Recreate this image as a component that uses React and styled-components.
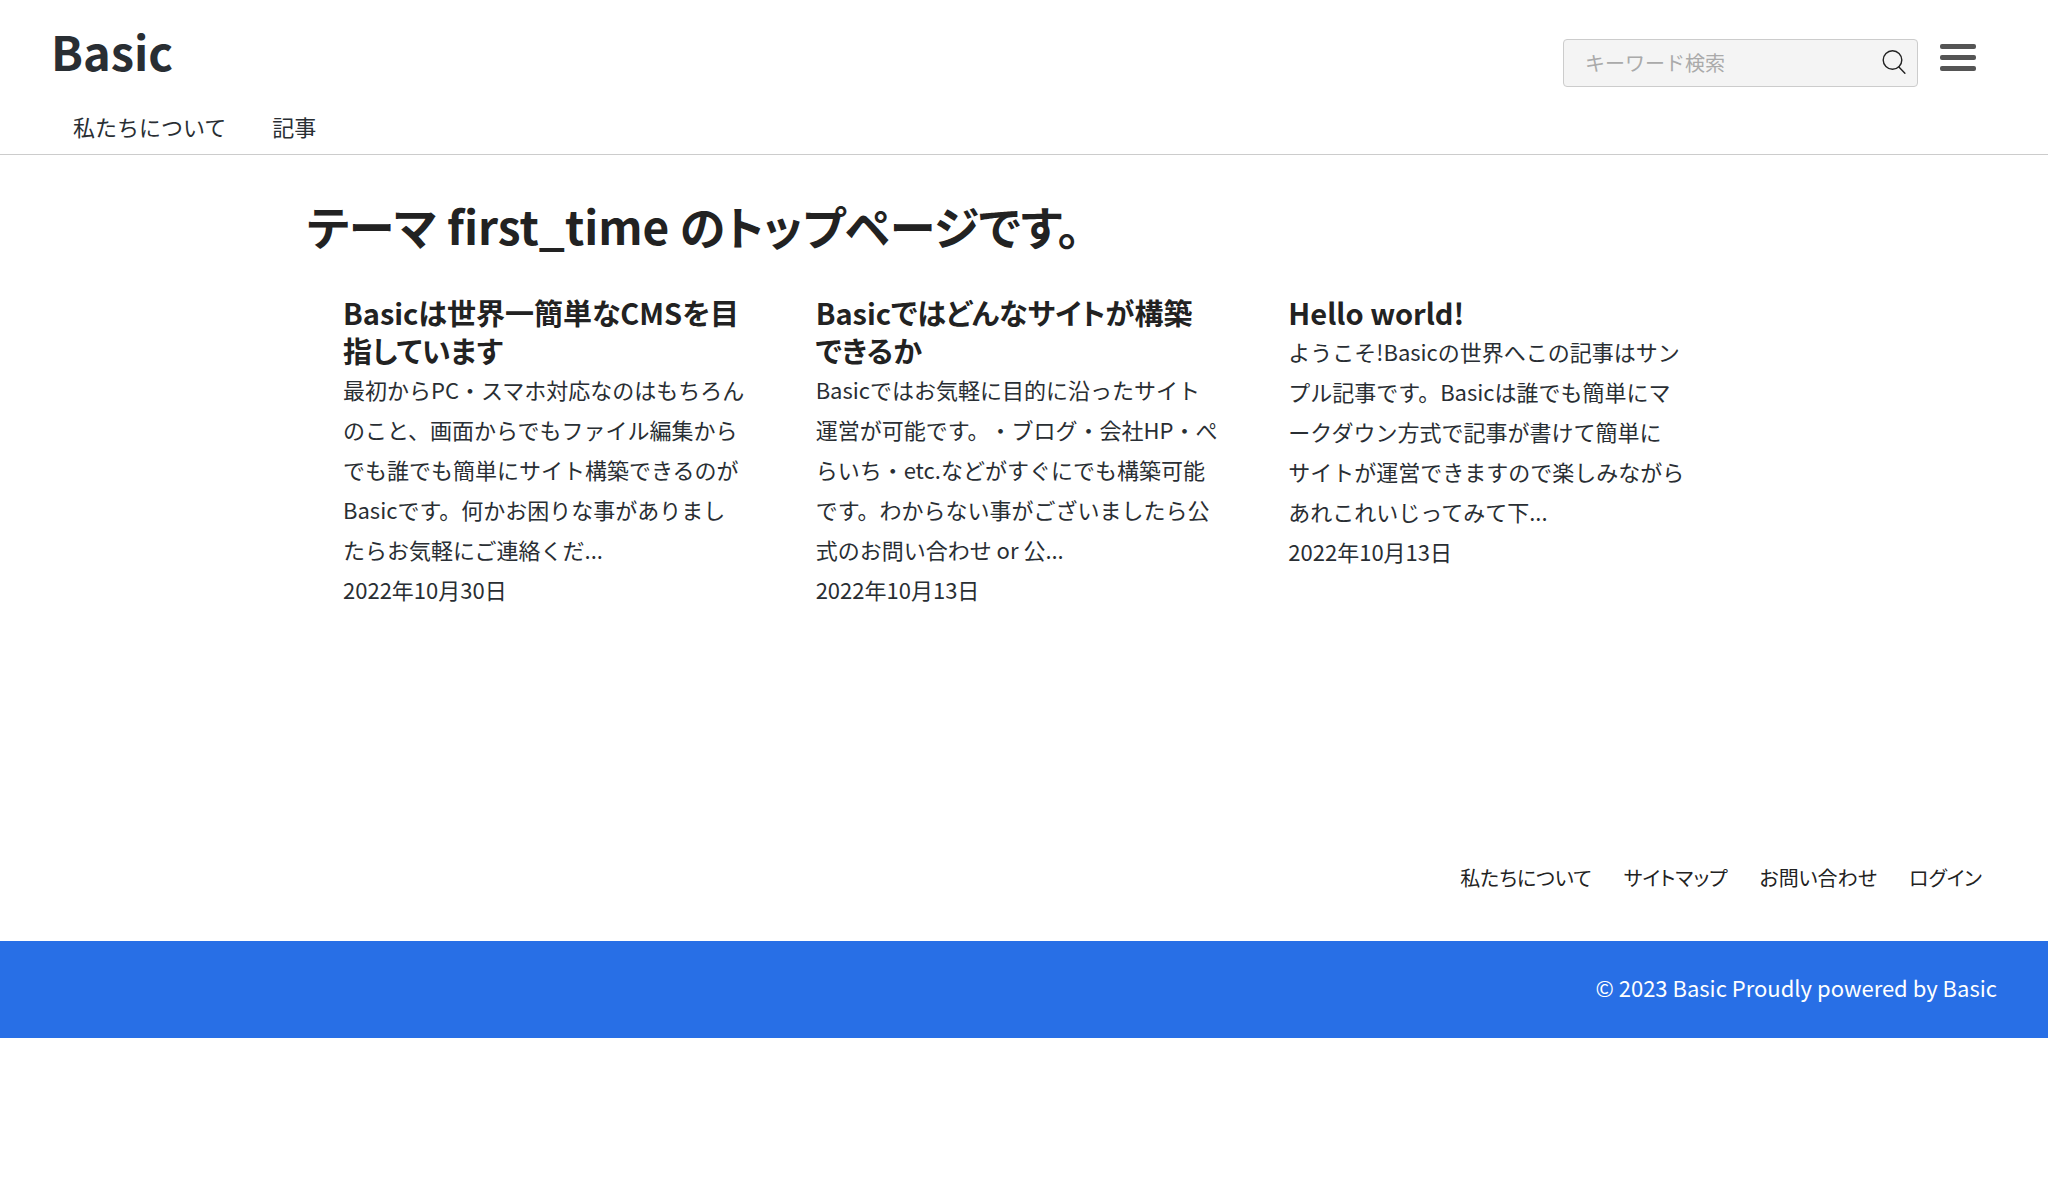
import React from 'react';
import styled, { createGlobalStyle } from 'styled-components';

const GlobalStyle = createGlobalStyle`
  *, *::before, *::after { box-sizing: border-box; }
  body {
    margin: 0;
    background: #fff;
    color: #292e33;
    font-family: "Noto Sans CJK JP", sans-serif;
    font-size: 22px;
    line-height: 40px;
    text-spacing-trim: space-all;
  }
  h1, h2, p, ul { margin: 0; padding: 0; }
  ul { list-style: none; }
  a { color: inherit; text-decoration: none; }
`;

const Header = styled.header`
  display: flex;
  align-items: flex-start;
  justify-content: space-between;
  padding: 17px 72px 8px 51px;
  border-bottom: 1px solid #ccc;
`;

const Brand = styled.a`
  display: block;
  font-size: 47px;
  font-weight: 700;
  line-height: 68px;
`;

const GlobalNav = styled.nav`
  padding: 21px 0 0 22px;
`;

const NavList = styled.ul`
  display: flex;
  gap: 46px;
`;

const Tools = styled.div`
  display: flex;
  align-items: flex-start;
  gap: 22px;
  padding-top: 22px;
`;

const SearchForm = styled.form`
  display: flex;
  align-items: center;
  width: 355px;
  height: 48px;
  padding: 0 9px 0 21px;
  border: 1px solid #ccc;
  border-radius: 4px;
  background: #f4f4f4;
`;

const SearchInput = styled.input`
  flex: 1;
  min-width: 0;
  height: 38px;
  padding: 0;
  border: 0;
  outline: 0;
  background: transparent;
  color: inherit;
  font: inherit;
  font-size: 20px;
  &::placeholder { color: #aaa; opacity: 1; }
`;

const IconButton = styled.button`
  display: flex;
  padding: 0;
  border: 0;
  background: none;
  cursor: pointer;
`;

const MenuButton = styled(IconButton)`
  flex-direction: column;
  gap: 6px;
  width: 36px;
  padding-top: 5px;
`;

const MenuBar = styled.span`
  width: 100%;
  height: 5px;
  border-radius: 2px;
  background: #555;
`;

const Main = styled.main`
  max-width: 1434px;
  min-height: 670px;
  margin: 0 auto;
  padding-top: 36px;
`;

const PageTitle = styled.h1`
  color: #222;
  font-size: 46px;
  line-height: 68px;
  font-feature-settings: "palt";
`;

const ArticleGrid = styled.div`
  display: grid;
  grid-template-columns: repeat(3, 1fr);
  padding: 34px 8px 0;
`;

const Article = styled.article`
  padding-left: 28px;
`;

const ArticleTitle = styled.h2`
  color: #222;
  font-size: 29px;
  line-height: 38px;
  font-feature-settings: "palt";
`;

const FooterNav = styled.nav`
  padding: 33px 66px 43px;
  color: #222;
  font-size: 20px;
  font-feature-settings: "palt";
`;

const FooterList = styled.ul`
  display: flex;
  justify-content: flex-end;
  gap: 32px;
`;

const Copyright = styled.p`
  padding: 26px 51px 31px;
  background: #286fe6;
  color: #fff;
`;

const CopyrightText = styled.small`
  display: block;
  font-size: 22px;
  text-align: right;
`;

const articles = [
  {
    title: ['Basicは世界一簡単なCMSを目', '指しています'],
    body: [
      '最初からPC・スマホ対応なのはもちろん',
      'のこと、画面からでもファイル編集から',
      'でも誰でも簡単にサイト構築できるのが',
      'Basicです。何かお困りな事がありまし',
      'たらお気軽にご連絡くだ...',
    ],
    date: '2022年10月30日',
    iso: '2022-10-30',
  },
  {
    title: ['Basicではどんなサイトが構築', 'できるか'],
    body: [
      'Basicではお気軽に目的に沿ったサイト',
      '運営が可能です。・ブログ・会社HP・ぺ',
      'らいち・etc.などがすぐにでも構築可能',
      'です。わからない事がございましたら公',
      '式のお問い合わせ or 公...',
    ],
    date: '2022年10月13日',
    iso: '2022-10-13',
  },
  {
    title: ['Hello world!'],
    body: [
      'ようこそ!Basicの世界へこの記事はサン',
      'プル記事です。Basicは誰でも簡単にマ',
      'ークダウン方式で記事が書けて簡単に',
      'サイトが運営できますので楽しみながら',
      'あれこれいじってみて下...',
    ],
    date: '2022年10月13日',
    iso: '2022-10-13',
  },
];

const Lines = ({ items }) =>
  items.map((line, i) => (
    <React.Fragment key={line}>
      {i > 0 && <br />}
      {line}
    </React.Fragment>
  ));

const SearchIcon = () => (
  <svg width="26" height="26" viewBox="0 0 26 26" fill="none" stroke="#222" strokeWidth="1.4" strokeLinecap="round" aria-hidden="true">
    <circle cx="10.5" cy="10" r="9.3" />
    <path d="M16.9 16.9 22.9 23.2" />
  </svg>
);

export default function App() {
  return (
    <>
      <GlobalStyle />
      <Header>
        <div>
          <Brand href="#">Basic</Brand>
          <GlobalNav aria-label="メイン">
            <NavList>
              <li><a href="#about">私たちについて</a></li>
              <li><a href="#posts">記事</a></li>
            </NavList>
          </GlobalNav>
        </div>
        <Tools>
          <SearchForm role="search" onSubmit={(e) => e.preventDefault()}>
            <SearchInput type="text" aria-label="キーワード検索" placeholder="キーワード検索" />
            <IconButton type="submit" aria-label="検索"><SearchIcon /></IconButton>
          </SearchForm>
          <MenuButton type="button" aria-label="メニュー">
            <MenuBar /><MenuBar /><MenuBar />
          </MenuButton>
        </Tools>
      </Header>
      <Main>
        <PageTitle>テーマ first_time のトップページです。</PageTitle>
        <ArticleGrid>
          {articles.map((a) => (
            <Article key={a.title[0]}>
              <ArticleTitle><Lines items={a.title} /></ArticleTitle>
              <p><Lines items={a.body} /></p>
              <time dateTime={a.iso}>{a.date}</time>
            </Article>
          ))}
        </ArticleGrid>
      </Main>
      <footer>
        <FooterNav aria-label="フッター">
          <FooterList>
            <li><a href="#about">私たちについて</a></li>
            <li><a href="#sitemap">サイトマップ</a></li>
            <li><a href="#contact">お問い合わせ</a></li>
            <li><a href="#login">ログイン</a></li>
          </FooterList>
        </FooterNav>
        <Copyright><CopyrightText>© 2023 Basic Proudly powered by Basic</CopyrightText></Copyright>
      </footer>
    </>
  );
}
